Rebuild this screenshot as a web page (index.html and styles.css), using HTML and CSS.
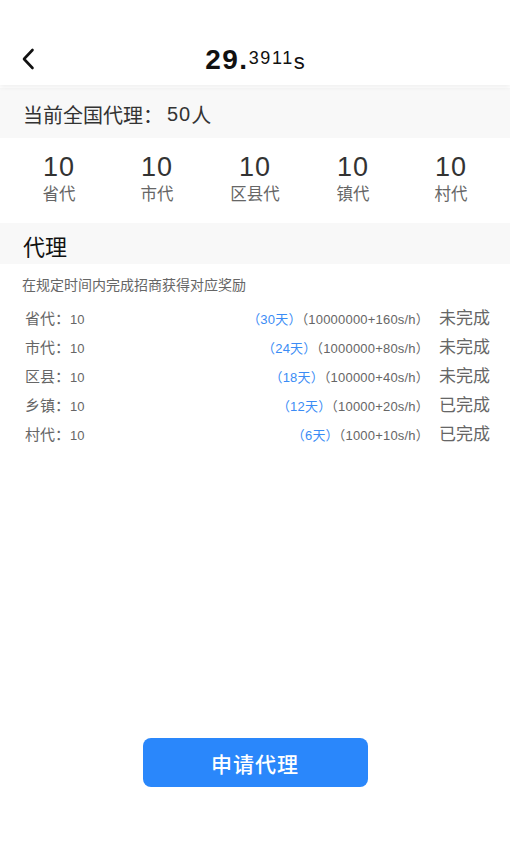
FILE: index.html
```html
<!DOCTYPE html>
<html lang="zh-CN">
<head>
<meta charset="utf-8">
<title>代理</title>
<link rel="stylesheet" href="styles.css">
</head>
<body>
<div class="page">
  <header class="topbar">
    <div class="back">
      <svg width="14" height="22" viewBox="0 0 14 22"><path d="M11.5 2 L3 11 L11.5 20" fill="none" stroke="#111" stroke-width="2.6" stroke-linecap="round" stroke-linejoin="round"/></svg>
    </div>
    <div class="title"><span class="t-main">29.</span><span class="t-sup">3911</span><span class="t-unit">s</span></div>
    <div></div>
  </header>

  <section class="band band-total">当前全国代理：<span class="total-num">50</span>人</section>

  <section class="stats">
    <div class="stat"><div class="num">10</div><div class="lbl">省代</div></div>
    <div class="stat"><div class="num">10</div><div class="lbl">市代</div></div>
    <div class="stat"><div class="num">10</div><div class="lbl">区县代</div></div>
    <div class="stat"><div class="num">10</div><div class="lbl">镇代</div></div>
    <div class="stat"><div class="num">10</div><div class="lbl">村代</div></div>
  </section>

  <section class="band band-title">代理</section>

  <p class="desc">在规定时间内完成招商获得对应奖励</p>

  <div class="rows">
    <div class="row"><span class="name">省代：<em>10</em></span><span class="rule"><b>（30天）</b>（10000000+160s/h）</span><span class="state">未完成</span></div>
    <div class="row"><span class="name">市代：<em>10</em></span><span class="rule"><b>（24天）</b>（1000000+80s/h）</span><span class="state">未完成</span></div>
    <div class="row"><span class="name">区县：<em>10</em></span><span class="rule"><b>（18天）</b>（100000+40s/h）</span><span class="state">未完成</span></div>
    <div class="row"><span class="name">乡镇：<em>10</em></span><span class="rule"><b>（12天）</b>（10000+20s/h）</span><span class="state">已完成</span></div>
    <div class="row"><span class="name">村代：<em>10</em></span><span class="rule"><b>（6天）</b>（1000+10s/h）</span><span class="state">已完成</span></div>
  </div>

  <button class="apply">申请代理</button>
</div>
</body>
</html>
```

FILE: styles.css
```css
* { box-sizing: border-box; }
html, body { margin: 0; padding: 0; }
body {
  width: 510px;
  height: 850px;
  background: #fff;
  font-family: "Liberation Sans", "Noto Sans CJK SC", sans-serif;
  color: #333;
  overflow: hidden;
}
.page {
  height: 850px;
  display: flex;
  flex-direction: column;
}
.topbar {
  height: 85px;
  padding-top: 30px;
  display: grid;
  grid-template-columns: 1fr auto 1fr;
  align-items: center;
  background: #fff;
  box-shadow: 0 2px 5px rgba(0,0,0,0.07);
  position: relative;
  z-index: 1;
}
.back {
  padding-left: 21px;
  display: flex;
  align-items: center;
  padding-top: 2px;
}
.title {
  color: #111;
  white-space: nowrap;
  line-height: 1;
  padding-top: 4px;
}
.t-main { font-size: 28px; font-weight: bold; letter-spacing: 1.5px; }
.t-sup { font-size: 18px; vertical-align: 5px; letter-spacing: 1.6px; }
.t-unit { font-size: 22px; }

.band {
  background: #f8f8f8;
  padding-left: 23px;
  display: flex;
  align-items: center;
}
.band-total {
  margin-top: 3px;
  height: 50px;
  font-size: 20px;
  color: #333;
  padding-top: 2px;
}
.total-num { letter-spacing: 1px; margin-left: 4px; }
.stats {
  height: 85px;
  padding: 0 10px;
  display: grid;
  grid-template-columns: repeat(5, 1fr);
  align-content: center;
  padding-bottom: 5px;
}
.stat { text-align: center; }
.num { font-size: 27px; line-height: 30px; color: #333; letter-spacing: 1px; }
.lbl { font-size: 16.5px; line-height: 22px; color: #666; font-family: "Noto Sans CJK SC", sans-serif; }
.band-title {
  height: 41px;
  font-size: 22px;
  color: #111;
  font-family: "Noto Sans CJK SC", sans-serif;
  padding-top: 2px;
}
.desc {
  margin: 12px 0 0 22px;
  font-size: 14px;
  line-height: 18px;
  color: #666;
}
.rows {
  margin-top: 10px;
  padding: 0 20px 0 25px;
}
.row {
  height: 29px;
  display: flex;
  align-items: baseline;
  color: #666;
}
.name { font-size: 15px; line-height: 22px; color: #666; flex: 1; }
.name em { font-style: normal; font-size: 13px; }
.rule { font-size: 13px; color: #666; margin-right: 10px; letter-spacing: 0.2px; }
.rule b { font-weight: normal; color: #3b8cf5; }
.state { font-size: 17px; color: #666; width: 51px; text-align: left; }

.apply {
  margin: auto auto 63px;
  width: 225px;
  height: 49px;
  border: none;
  border-radius: 8px;
  background: #2a87fb;
  color: #fff;
  font-size: 21px;
  font-weight: 500;
  font-family: "Noto Sans CJK SC", sans-serif;
  letter-spacing: 1px;
  padding: 0;
}
```
